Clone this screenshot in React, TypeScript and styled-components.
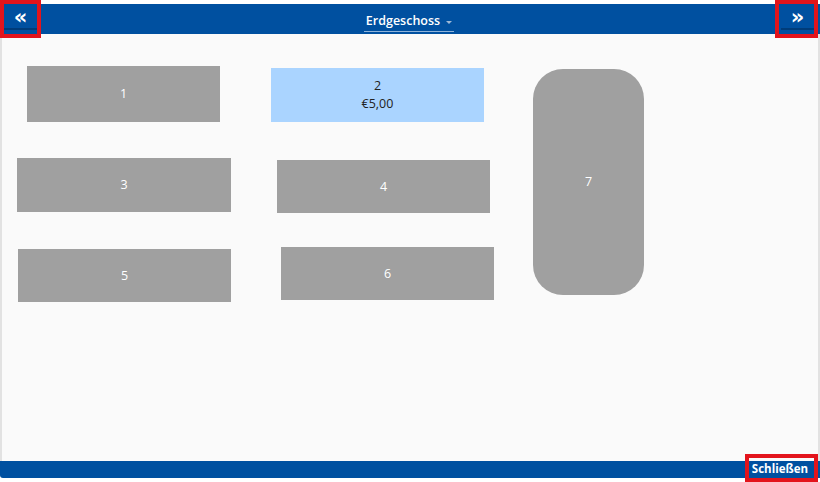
import React, { FC } from 'react'
import styled, { createGlobalStyle } from 'styled-components'

const GlobalStyle = createGlobalStyle`
    html, body {
        margin: 0;
        padding: 0;
        background: #ffffff;
        font-family: "Open Sans", "Noto Sans", sans-serif;
    }
`

const BLUE = '#0050a0'

interface ITable {
    id: string
    x: number
    y: number
    w: number
    h: number
    round?: boolean
    busy?: boolean
    amount?: string
}

const tables: ITable[] = [
    { id: '1', x: 27, y: 66, w: 193, h: 56 },
    { id: '2', x: 271, y: 68, w: 213, h: 54, busy: true, amount: '€5,00' },
    { id: '3', x: 17, y: 158, w: 214, h: 54 },
    { id: '4', x: 277, y: 160, w: 213, h: 53 },
    { id: '5', x: 18, y: 249, w: 213, h: 53 },
    { id: '6', x: 281, y: 247, w: 213, h: 53 },
    { id: '7', x: 533, y: 69, w: 111, h: 226, round: true },
]

const Screen = styled.div`
    position: relative;
    width: 820px;
    height: 482px;
    display: flex;
    flex-direction: column;
    overflow: hidden;
`

const TopBar = styled.header`
    margin-top: 4px;
    height: 30px;
    background: ${BLUE};
    display: flex;
    align-items: flex-start;
    justify-content: space-between;
    padding: 0 6px 0 4px;
`

const NavButton = styled.button`
    width: 33px;
    height: 26px;
    border: none;
    border-bottom: 2px solid #003c7a;
    background: ${BLUE};
    color: #ffffff;
    font-family: "DejaVu Sans", sans-serif;
    font-size: 21px;
    font-weight: bold;
    line-height: 22px;
    padding: 2px 0 0 0;
    cursor: pointer;
`

const FloorSelect = styled.div`
    margin-top: 8px;
    display: flex;
    align-items: center;
    gap: 6px;
    color: #ffffff;
    font-size: 12.5px;
    font-weight: 600;
    line-height: 18px;
    padding: 0 2px 1px 2px;
    border-bottom: 1px solid #8fb3d9;
`

const Caret = styled.span`
    width: 0;
    height: 0;
    border-left: 3px solid transparent;
    border-right: 3px solid transparent;
    border-top: 3px solid #9fb9d6;
    margin-top: 2px;
`

const Canvas = styled.main`
    position: relative;
    flex: 1;
    background: #fafafa;
    border-left: 2px solid #e2e2e2;
    border-right: 2px solid #e2e2e2;
`

const Table = styled.div<{ $busy?: boolean; $round?: boolean }>`
    position: absolute;
    display: flex;
    flex-direction: column;
    align-items: center;
    justify-content: center;
    background: ${({ $busy }) => ($busy ? '#aad4ff' : '#a0a0a0')};
    color: ${({ $busy }) => ($busy ? '#222222' : '#ffffff')};
    border-radius: ${({ $round }) => ($round ? '30px' : '0')};
    font-size: 12.5px;
    line-height: 18px;
`

const BottomBar = styled.footer`
    height: 17px;
    margin-bottom: 4px;
    background: ${BLUE};
    border-bottom-left-radius: 3px;
    display: flex;
    justify-content: flex-end;
    padding-right: 6px;
`

const CloseButton = styled.button`
    height: 20px;
    margin-top: -3px;
    padding: 0 6px;
    border: none;
    background: ${BLUE};
    color: #ffffff;
    font-family: "Open Sans", sans-serif;
    font-size: 11.5px;
    font-weight: bold;
    cursor: pointer;
`

const Highlight = styled.div`
    position: absolute;
    border: 4px solid #e3141c;
    pointer-events: none;
`

const App: FC = () => {
    return (
        <Screen>
            <GlobalStyle />
            <TopBar>
                <NavButton>«</NavButton>
                <FloorSelect>
                    Erdgeschoss
                    <Caret />
                </FloorSelect>
                <NavButton>»</NavButton>
            </TopBar>
            <Canvas>
                {tables.map(t => (
                    <Table
                        key={t.id}
                        $busy={t.busy}
                        $round={t.round}
                        style={{ left: t.x - 2, top: t.y - 34, width: t.w, height: t.h }}
                    >
                        <span>{t.id}</span>
                        {t.amount && <span>{t.amount}</span>}
                    </Table>
                ))}
            </Canvas>
            <BottomBar>
                <CloseButton>Schließen</CloseButton>
            </BottomBar>
            <Highlight style={{ left: 0, top: 0, width: 33, height: 30 }} />
            <Highlight style={{ left: 775, top: 0, width: 35, height: 30 }} />
            <Highlight style={{ left: 745, top: 454, width: 65, height: 20 }} />
        </Screen>
    )
}

export default App
